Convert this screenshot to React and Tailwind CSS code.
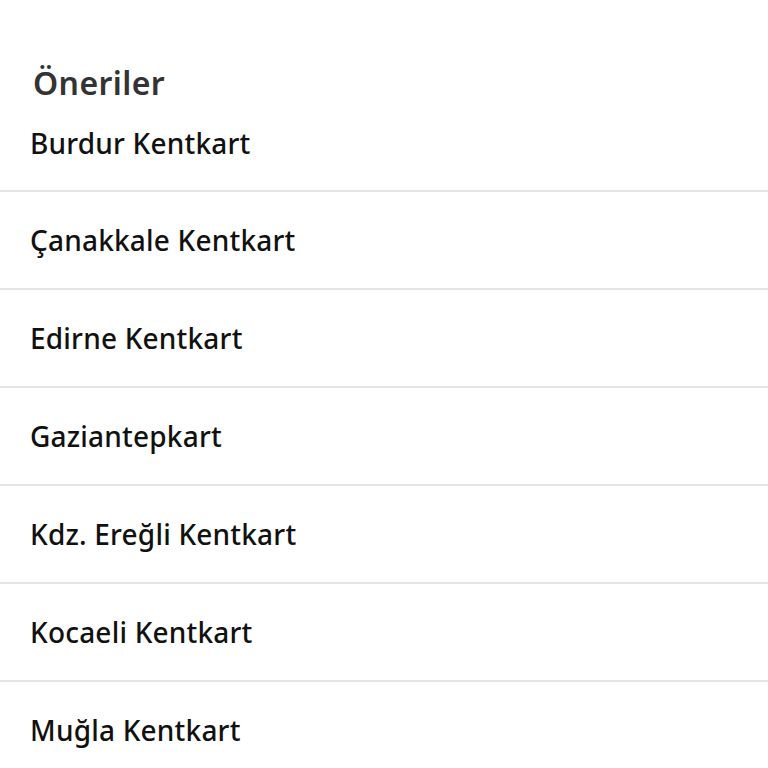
import React from "react";

const items = [
  "Çanakkale Kentkart",
  "Edirne Kentkart",
  "Gaziantepkart",
  "Kdz. Ereğli Kentkart",
  "Kocaeli Kentkart",
  "Muğla Kentkart",
];

export default function App() {
  return (
    <div className="w-[768px] h-[768px] overflow-hidden bg-white" style={{ fontFamily: "'Noto Sans', Lato, sans-serif" }}>
      <div className="pt-[63px] pl-[33px] h-[103px] text-[32px] leading-[40px] font-semibold tracking-[0.4px] text-[#333333]">
        Öneriler
      </div>
      <div className="flex flex-col">
        <div className="h-[89px] pt-[22px] pl-[30px] border-b-2 border-[#e4e4e4] text-[28px] leading-[36px] font-medium tracking-[0.2px] text-[#111111]">
          Burdur Kentkart
        </div>
        {items.map((t) => (
          <div
            key={t}
            className="h-[98px] shrink-0 flex items-center pl-[30px] border-b-2 border-[#e4e4e4] text-[28px] leading-[36px] font-medium tracking-[0.2px] text-[#111111]"
          >
            {t}
          </div>
        ))}
      </div>
    </div>
  );
}
